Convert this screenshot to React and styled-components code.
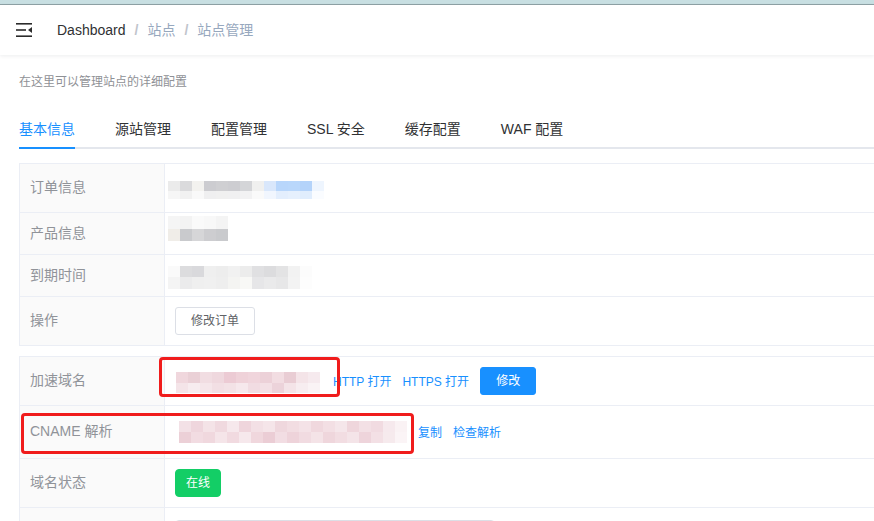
import styled, { createGlobalStyle } from "styled-components";

const GlobalStyle = createGlobalStyle`
  html, body {
    margin: 0;
    padding: 0;
    background: #fff;
    overflow: hidden;
  }
  body {
    font-family: "Liberation Sans", "Noto Sans CJK SC", sans-serif;
    font-size: 14px;
    color: #606266;
  }
`;

const TopStrip = styled.div`
  height: 4px;
  background: #c8dfe2;
  border-bottom: 1px solid #8fa2a6;
`;

const Navbar = styled.div`
  height: 50px;
  display: flex;
  align-items: center;
  padding-left: 16px;
  gap: 25px;
  box-shadow: 0 1px 4px rgba(0, 21, 41, 0.08);
`;

const Crumbs = styled.div`
  display: flex;
  align-items: center;
  font-size: 14px;
  line-height: 50px;
`;

const Crumb = styled.span`
  color: ${(p) => (p.$home ? "#303133" : "#97a8be")};
`;

const Sep = styled.span`
  margin: 0 9px;
  color: #c0c4cc;
  font-weight: bold;
`;

const Main = styled.div`
  padding: 17px 19px 0;
  width: 1000px;
`;

const Desc = styled.div`
  font-size: 12px;
  line-height: 20px;
  color: #8f9196;
`;

const TabBar = styled.div`
  margin-top: 17px;
  height: 38px;
  display: flex;
  align-items: flex-start;
  border-bottom: 2px solid #e4e7ed;
`;

const Tab = styled.div`
  height: 40px;
  padding: 0 20px;
  &:first-child {
    padding-left: 0;
  }
`;

const TabLabel = styled.span`
  display: inline-block;
  box-sizing: border-box;
  height: 40px;
  line-height: 40px;
  font-size: 14px;
  color: ${(p) => (p.$active ? "#1890ff" : "#303133")};
  border-bottom: 2px solid ${(p) => (p.$active ? "#1890ff" : "transparent")};
`;

const Table = styled.div`
  position: relative;
  margin-top: ${(p) => p.$mt}px;
  border-top: 1px solid #ebeef5;
  border-left: 1px solid #ebeef5;
`;

const Row = styled.div`
  display: flex;
  box-sizing: border-box;
  height: ${(p) => p.$h}px;
  border-bottom: 1px solid #ebeef5;
`;

const Label = styled.div`
  box-sizing: border-box;
  width: 145px;
  flex-shrink: 0;
  padding: 0 10px 4px;
  display: flex;
  align-items: center;
  background: #fafafa;
  color: #909399;
  font-size: 14px;
  border-right: 1px solid #ebeef5;
`;

const Cell = styled.div`
  flex: 1;
  display: flex;
  align-items: ${(p) => (p.$top ? "flex-start" : "center")};
  padding: ${(p) => (p.$top ? "12px 10px 0" : "0 10px")};
  gap: ${(p) => p.$gap || 0}px;
`;

const MosaicBox = styled.div`
  display: flex;
  flex-direction: column;
  margin: ${(p) => p.$mt || 0}px ${(p) => p.$mr || 0}px 0 ${(p) => p.$ml}px;
`;

const MosaicRow = styled.div`
  display: flex;
  height: ${(p) => p.$h}px;
`;

const Pixel = styled.div`
  width: 12px;
  background: ${(p) => p.$c};
`;

const Link = styled.span`
  font-size: 12px;
  color: #1890ff;
  padding-bottom: 2px;
`;

const Button = styled.button`
  box-sizing: border-box;
  height: 28px;
  padding: 0 ${(p) => (p.$narrow ? 10 : 15)}px;
  font-family: inherit;
  font-size: 12px;
  line-height: 26px;
  border-radius: ${(p) => (p.$narrow ? 4 : 3)}px;
  border: 1px solid
    ${(p) =>
      p.$kind === "primary" ? "#1890ff" : p.$kind === "success" ? "#13ce66" : "#dcdfe6"};
  background: ${(p) =>
    p.$kind === "primary" ? "#1890ff" : p.$kind === "success" ? "#13ce66" : "#fff"};
  color: ${(p) => (p.$kind ? "#fff" : "#606266")};
`;

const Input = styled.div`
  box-sizing: border-box;
  width: 320px;
  height: 32px;
  border: 1px solid #dcdfe6;
  border-radius: 4px;
`;

const Mark = styled.div`
  position: absolute;
  box-sizing: border-box;
  border: 3px solid #f01c1c;
  border-radius: 4px;
  left: ${(p) => p.$x}px;
  top: ${(p) => p.$y}px;
  width: ${(p) => p.$w}px;
  height: ${(p) => p.$hh}px;
`;

function MenuIcon() {
  return (
    <svg width="16" height="14" viewBox="0 0 16 14">
      <rect x="0" y="0" width="16" height="1.6" fill="#2b2b2b" />
      <rect x="0" y="6.2" width="10" height="1.6" fill="#2b2b2b" />
      <rect x="0" y="12.4" width="16" height="1.6" fill="#2b2b2b" />
      <polygon points="16,4 12,7 16,10" fill="#2b2b2b" />
    </svg>
  );
}

function Mosaic({ rows, ml, mt, mr }) {
  return (
    <MosaicBox $ml={ml} $mt={mt} $mr={mr}>
      {rows.map((r, i) => (
        <MosaicRow key={i} $h={r.h}>
          {r.c.map((c, j) => (
            <Pixel key={j} $c={c} />
          ))}
        </MosaicRow>
      ))}
    </MosaicBox>
  );
}

const orderPx = [
  { h: 10, c: ["#ebebeb", "#dadadc", "#f3f2ef", "#ccccd0", "#cfcfd2", "#cdcdd1", "#d4d5d8", "#f0f0ef", "#d9e7fb", "#b8d6fb", "#b9d7fb", "#b4d3fa", "#eef5fe"] },
  { h: 8, c: ["#f6f6f6", "#f1f1f1", "#f9f9f9", "#efeff0", "#f0f0f0", "#f0f0f1", "#f2f2f3", "#fafafa", "#f1f6fe", "#e3eefd", "#e6f0fd", "#e0edfd", "#fafcff"] },
];

const productPx = [
  { h: 13, c: ["#f5f5f5", "#f3f3f3", "#fafafa", "#f8f8f8", "#f4f4f4"] },
  { h: 12, c: ["#f0ede8", "#c9cacd", "#d6d6d8", "#cdcdd0", "#c9cacd"] },
];

const expirePx = [
  { h: 11, c: ["#fafafa", "#dcdcde", "#d9d9dc", "#efefef", "#ededed", "#f1f1f1", "#ececec", "#e0e0e2", "#dcdcde", "#e3e3e4", "#f2f2f2", "#fcfcfc"] },
  { h: 12, c: ["#f4f4f4", "#ebebec", "#efefef", "#f0f0f0", "#eeeeee", "#f4f4f2", "#f8f8f6", "#e6e6e8", "#eaeaeb", "#e7e7e8", "#f3f3f3", "#fdfdfd"] },
];

const domainPx = [
  { h: 11, c: ["#f0d7dd", "#ead0d6", "#f1dde2", "#efd8de", "#eccbd4", "#efd2d9", "#f0d5dc", "#ecd1d8", "#f2dde2", "#e9cdd4", "#f4e4e8", "#f6eaee"] },
  { h: 10, c: ["#f4e4e8", "#f7ecef", "#f5e6ea", "#f2dfe4", "#f3e2e6", "#f6e8ec", "#f1dce2", "#f3e0e5", "#ecd3da", "#f4e4e8", "#f7edf0", "#faf3f5"] },
];

const cnamePx = [
  { h: 11, c: ["#f3e1e6", "#efd6dd", "#f4e3e7", "#f0d9df", "#f6e8ec", "#efd5dc", "#f3e0e5", "#f5e5e9", "#efd7dd", "#f2dde2", "#f4e2e7", "#f0d8de", "#f3dfe4", "#f5e6ea", "#efd6dc", "#f3e0e5", "#f1dbe1", "#f6e9ed", "#faf2f4"] },
  { h: 11, c: ["#ecd0d7", "#f2dce2", "#f0d8de", "#f5e5e9", "#f1dae0", "#f6e8ec", "#f0d7dd", "#ebcdd5", "#f2dde3", "#eed3da", "#f1dbe1", "#f4e3e7", "#efd6dc", "#f2dde2", "#f4e4e8", "#eed4db", "#f3e0e5", "#f6eaed", "#fbf4f6"] },
];

const tabs = ["基本信息", "源站管理", "配置管理", "SSL 安全", "缓存配置", "WAF 配置"];

export default function App() {
  return (
    <>
      <GlobalStyle />
      <TopStrip />
      <Navbar>
        <MenuIcon />
        <Crumbs>
          <Crumb $home>Dashboard</Crumb>
          <Sep>/</Sep>
          <Crumb>站点</Crumb>
          <Sep>/</Sep>
          <Crumb>站点管理</Crumb>
        </Crumbs>
      </Navbar>
      <Main>
        <Desc>在这里可以管理站点的详细配置</Desc>
        <TabBar>
          {tabs.map((t, i) => (
            <Tab key={t}>
              <TabLabel $active={i === 0}>{t}</TabLabel>
            </Tab>
          ))}
        </TabBar>

        <Table $mt={14}>
          <Row $h={49}>
            <Label>订单信息</Label>
            <Cell>
              <Mosaic rows={orderPx} ml={-7} mt={3} />
            </Cell>
          </Row>
          <Row $h={42}>
            <Label>产品信息</Label>
            <Cell>
              <Mosaic rows={productPx} ml={-7} mt={-11} />
            </Cell>
          </Row>
          <Row $h={42}>
            <Label>到期时间</Label>
            <Cell>
              <Mosaic rows={expirePx} ml={-7} mt={3} />
            </Cell>
          </Row>
          <Row $h={49}>
            <Label>操作</Label>
            <Cell>
              <Button>修改订单</Button>
            </Cell>
          </Row>
        </Table>

        <Table $mt={10}>
          <Row $h={49}>
            <Label>加速域名</Label>
            <Cell $gap={11}>
              <Mosaic rows={domainPx} ml={1} mt={2} mr={2} />
              <Link>HTTP 打开</Link>
              <Link>HTTPS 打开</Link>
              <Button $kind="primary">修改</Button>
            </Cell>
          </Row>
          <Row $h={53}>
            <Label>CNAME 解析</Label>
            <Cell $gap={11}>
              <Mosaic rows={cnamePx} ml={4} />
              <Link>复制</Link>
              <Link>检查解析</Link>
            </Cell>
          </Row>
          <Row $h={49}>
            <Label>域名状态</Label>
            <Cell>
              <Button $kind="success" $narrow>
                在线
              </Button>
            </Cell>
          </Row>
          <Row $h={60}>
            <Label />
            <Cell $top>
              <Input />
            </Cell>
          </Row>
          <Mark $x={139} $y={0} $w={181} $hh={40} />
          <Mark $x={1} $y={56} $w={393} $hh={41} />
        </Table>
      </Main>
    </>
  );
}
